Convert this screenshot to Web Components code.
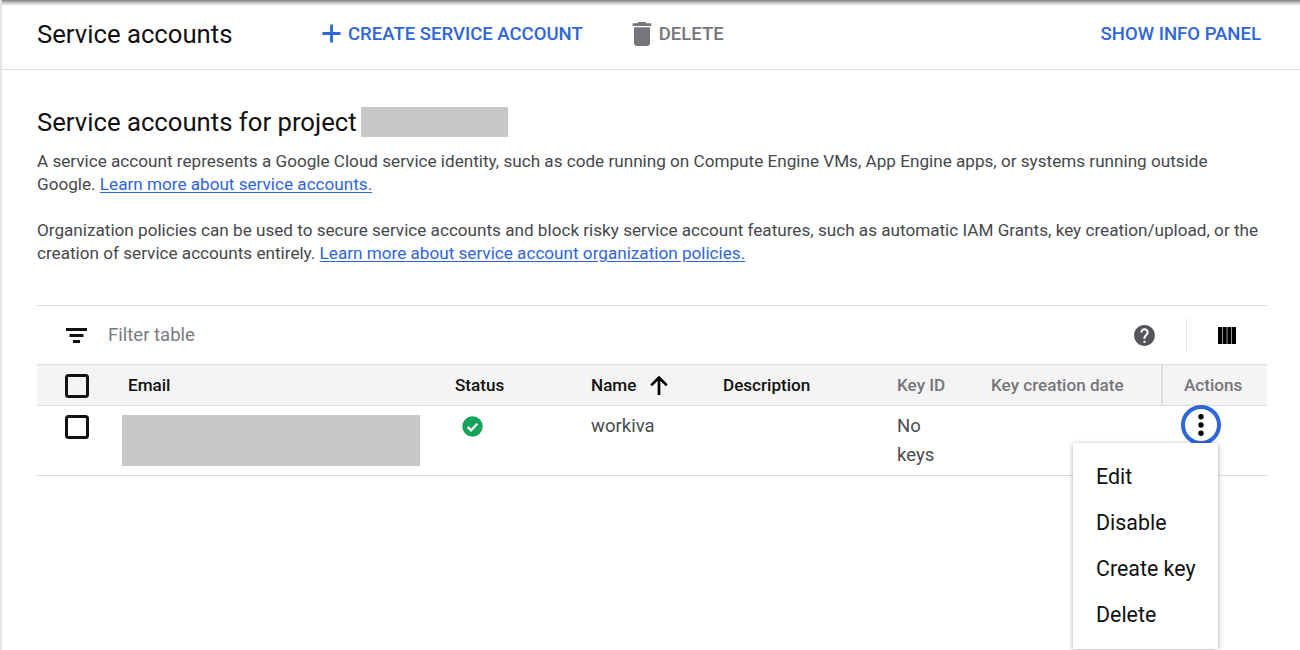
<!DOCTYPE html>
<html>
<head>
<meta charset="utf-8">
<title>Service accounts</title>
<style>
  html, body { margin: 0; height: 650px; overflow: hidden; background: #fff; }
  body { font-family: Roboto, "Liberation Sans", sans-serif; color: #202124; }
</style>
</head>
<body>
<sa-page>
  <sa-toolbar slot="toolbar"></sa-toolbar>
  <sa-intro></sa-intro>
  <sa-table></sa-table>
</sa-page>

<script>
const ICONS = {
  plus: '<svg width="31" height="31" viewBox="0 0 24 24"><path fill="currentColor" d="M19 13.1h-5.9V19h-2.2v-5.9H5v-2.2h5.9V5h2.2v5.9H19z"/></svg>',
  trash: '<svg width="32" height="32" viewBox="0 0 24 24"><path fill="currentColor" d="M6 19c0 1.1.9 2 2 2h8c1.1 0 2-.9 2-2V7H6zM19 4h-3.5l-1-1h-5l-1 1H5v2h14z"/></svg>',
  filter: '<svg width="21" height="15" viewBox="0 0 21 15"><path fill="currentColor" d="M0 0h21v3H0zM3.5 6h14v3h-14zM7 12h7v3H7z"/></svg>',
  help: '<svg width="25" height="25" viewBox="0 0 24 24"><path fill="currentColor" d="M12 2C6.48 2 2 6.48 2 12s4.48 10 10 10 10-4.48 10-10S17.52 2 12 2zm1 17h-2v-2h2zm2.07-7.75-.9.92C13.45 12.9 13 13.5 13 15h-2v-.5c0-1.1.45-2.1 1.17-2.83l1.24-1.26c.37-.36.59-.86.59-1.41 0-1.1-.9-2-2-2s-2 .9-2 2H8c0-2.21 1.79-4 4-4s4 1.79 4 4c0 .88-.36 1.68-.93 2.25z"/></svg>',
  columns: '<svg width="18" height="17" viewBox="0 0 18 17"><path fill="currentColor" d="M0 0h4.4v17H0zM5 0h3.7v17H5zM9.3 0H13v17H9.3zM13.6 0H18v17h-4.4z"/></svg>',
  checkbox: '<svg width="24" height="24" viewBox="0 0 24 24"><rect x="1.5" y="1.5" width="21" height="21" rx="2" fill="none" stroke="currentColor" stroke-width="3"/></svg>',
  ok: '<svg width="21" height="21" viewBox="0 0 21 21"><circle cx="10.5" cy="10.5" r="10.2" fill="#16a35c"/><path d="M5.6 10.9l3.4 3.4 6.4-6.6" fill="none" stroke="#fff" stroke-width="2.3"/></svg>',
  arrowUp: '<svg width="18" height="19" viewBox="0 0 18 19"><path d="M9 19V2M1.2 9.4L9 1.6l7.8 7.8" fill="none" stroke="currentColor" stroke-width="2.7"/></svg>',
  dots: '<svg width="6" height="22" viewBox="0 0 6 22"><circle cx="3" cy="2.8" r="2.7"/><circle cx="3" cy="11" r="2.7"/><circle cx="3" cy="19.2" r="2.7"/></svg>'
}

class SaPage extends HTMLElement {
  constructor () {
    super()
    this.attachShadow({ mode: 'open' })
  }

  connectedCallback () {
    this.shadowRoot.innerHTML = `
      <style>
        :host {
          display: block;
          position: relative;
          height: 650px;
          overflow: hidden;
          box-sizing: border-box;
          border-left: 2px solid #e4e5e7;
        }
        .shade {
          position: absolute;
          inset: 0 0 auto -2px;
          height: 6px;
          background: linear-gradient(#808183, #bdbec0 40%, #fff);
        }
        main { padding: 0 33px 0 35px; }
      </style>
      <div class="shade"></div>
      <slot name="toolbar"></slot>
      <main><slot></slot></main>
    `
  }
}

class SaButton extends HTMLElement {
  constructor () {
    super()
    this.attachShadow({ mode: 'open' })
  }

  connectedCallback () {
    const icon = ICONS[this.getAttribute('icon')] || ''
    this.shadowRoot.innerHTML = `
      <style>
        :host {
          display: inline-flex;
          align-items: center;
          gap: 1px;
          color: var(--btn-color, #2f66d8);
          font: 500 18.55px/24px Roboto, sans-serif;
          white-space: nowrap;
          cursor: pointer;
        }
        svg { display: block; }
      </style>
      ${icon}<slot></slot>
    `
  }
}

class SaToolbar extends HTMLElement {
  constructor () {
    super()
    this.attachShadow({ mode: 'open' })
  }

  connectedCallback () {
    this.shadowRoot.innerHTML = `
      <style>
        :host {
          display: flex;
          align-items: center;
          box-sizing: border-box;
          height: 70px;
          padding: 0 39px 2px 35px;
          border-bottom: 1.5px solid #dcdddf;
        }
        h1 {
          margin: 0;
          width: 279px;
          font: 400 25.7px/32px Roboto, sans-serif;
          color: #111;
        }
        .delete { margin-left: 43px; --btn-color: #75767a; }
        .info { margin-left: auto; }
      </style>
      <h1>Service accounts</h1>
      <sa-button icon="plus">CREATE SERVICE ACCOUNT</sa-button>
      <sa-button class="delete" icon="trash">DELETE</sa-button>
      <sa-button class="info">SHOW INFO PANEL</sa-button>
    `
  }
}

class SaIntro extends HTMLElement {
  constructor () {
    super()
    this.attachShadow({ mode: 'open' })
  }

  connectedCallback () {
    this.shadowRoot.innerHTML = `
      <style>
        :host { display: block; padding-top: 36px; }
        h2 {
          display: flex;
          align-items: center;
          gap: 4px;
          margin: 0 0 12px;
          font: 400 25.7px/32px Roboto, sans-serif;
          color: #111;
        }
        .redacted { width: 147px; height: 30px; background: #c8c8ca; }
        p {
          margin: 0 0 23px;
          font: 400 17.14px/23px Roboto, sans-serif;
          color: #46484c;
        }
        a { color: #2f66d8; text-decoration: underline; text-underline-offset: 2px; }
      </style>
      <h2>Service accounts for project <span class="redacted"></span></h2>
      <p>A service account represents a Google Cloud service identity, such as code running on Compute Engine VMs, App Engine apps, or systems running outside Google. <a href="#">Learn more about service accounts.</a></p>
      <p>Organization policies can be used to secure service accounts and block risky service account features, such as automatic IAM Grants, key creation/upload, or the creation of service accounts entirely. <a href="#">Learn more about service account organization policies.</a></p>
    `
  }
}

class SaMenu extends HTMLElement {
  constructor () {
    super()
    this.attachShadow({ mode: 'open' })
  }

  connectedCallback () {
    this.shadowRoot.innerHTML = `
      <style>
        :host {
          display: block;
          position: absolute;
          z-index: 5;
          top: 138px;
          left: 1036px;
          width: 145px;
          box-sizing: border-box;
          padding: 11px 0;
          background: #fff;
          box-shadow: 0 1px 5px rgba(0, 0, 0, .35);
        }
        div {
          height: 46px;
          display: flex;
          align-items: center;
          padding-left: 23px;
          font: 400 21.4px/28px Roboto, sans-serif;
          color: #111;
        }
      </style>
      <div>Edit</div>
      <div>Disable</div>
      <div>Create key</div>
      <div>Delete</div>
    `
  }
}

class SaTable extends HTMLElement {
  constructor () {
    super()
    this.attachShadow({ mode: 'open' })
  }

  connectedCallback () {
    this.shadowRoot.innerHTML = `
      <style>
        :host {
          display: block;
          position: relative;
          margin-top: 40px;
          font-family: Roboto, sans-serif;
          color: #111;
        }
        .filter {
          display: flex;
          align-items: center;
          height: 59px;
          box-sizing: border-box;
          border-top: 1.5px solid #dcdddf;
          padding: 0 31px 0 29px;
        }
        .filter svg { display: block; }
        .filter .label { margin-left: 21px; flex: 1; font-size: 18.55px; color: #7a7b7f; }
        .help { color: #55565a; }
        .sep { height: 34px; width: 1px; margin: 0 31px 0 29px; background: #e6e7e8; }
        .cols { color: #000; }
        .grid {
          display: grid;
          grid-template-columns: 85px 327px 136px 132px 174px 94px 176px 106px;
        }
        .head {
          height: 42px;
          align-items: center;
          box-sizing: border-box;
          background: #f4f4f4;
          border-top: 1.5px solid #dcdddf;
          border-bottom: 1.5px solid #dcdddf;
          font-size: 17.1px;
          font-weight: 500;
        }
        .head > div, .row > div { padding-left: 6px; }
        .head > div { display: flex; align-items: center; height: 100%; box-sizing: border-box; }
        .head .box svg { margin-top: 2px; }
        .box { padding-left: 28px !important; color: #111; }
        .box svg { display: block; }
        .dim { color: #75767a; }
        .divider { border-left: 2px solid #dcdddf; padding-left: 21px !important; }
        .sort { margin-left: 14px; color: #000; display: block; }
        .sort svg { display: block; }
        .row {
          height: 70px;
          box-sizing: border-box;
          border-bottom: 1.5px solid #dcdddf;
          font-size: 18.55px;
          line-height: 29px;
          color: #4a4c50;
        }
        .row > div { padding-top: 6px; }
        .row .box { padding-top: 9px; }
        .row .mail { padding-left: 0; padding-top: 9px; }
        .row .mail span { display: block; width: 298px; height: 51px; background: #c8c8ca; }
        .row .status { padding: 10px 0 0 13px; }
        .row .status svg { display: block; }
        .row .act { position: relative; padding: 0; }
        .ring {
          position: absolute;
          left: 20px;
          top: -1px;
          width: 40px;
          height: 40px;
          box-sizing: border-box;
          border: 4px solid #2f66d8;
          border-radius: 50%;
          display: flex;
          align-items: center;
          justify-content: center;
          color: #000;
        }
      </style>
      <div class="filter">
        ${ICONS.filter}
        <span class="label">Filter table</span>
        <span class="help">${ICONS.help}</span>
        <span class="sep"></span>
        <span class="cols">${ICONS.columns}</span>
      </div>
      <div class="grid head">
        <div class="box">${ICONS.checkbox}</div>
        <div>Email</div>
        <div>Status</div>
        <div>Name<span class="sort">${ICONS.arrowUp}</span></div>
        <div>Description</div>
        <div class="dim">Key ID</div>
        <div class="dim">Key creation date</div>
        <div class="dim divider">Actions</div>
      </div>
      <div class="grid row">
        <div class="box">${ICONS.checkbox}</div>
        <div class="mail"><span></span></div>
        <div class="status">${ICONS.ok}</div>
        <div>workiva</div>
        <div></div>
        <div>No<br>keys</div>
        <div></div>
        <div class="act"><span class="ring">${ICONS.dots}</span></div>
      </div>
      <sa-menu></sa-menu>
    `
  }
}

customElements.define('sa-page', SaPage)
customElements.define('sa-button', SaButton)
customElements.define('sa-toolbar', SaToolbar)
customElements.define('sa-intro', SaIntro)
customElements.define('sa-menu', SaMenu)
customElements.define('sa-table', SaTable)
</script>
</body>
</html>
